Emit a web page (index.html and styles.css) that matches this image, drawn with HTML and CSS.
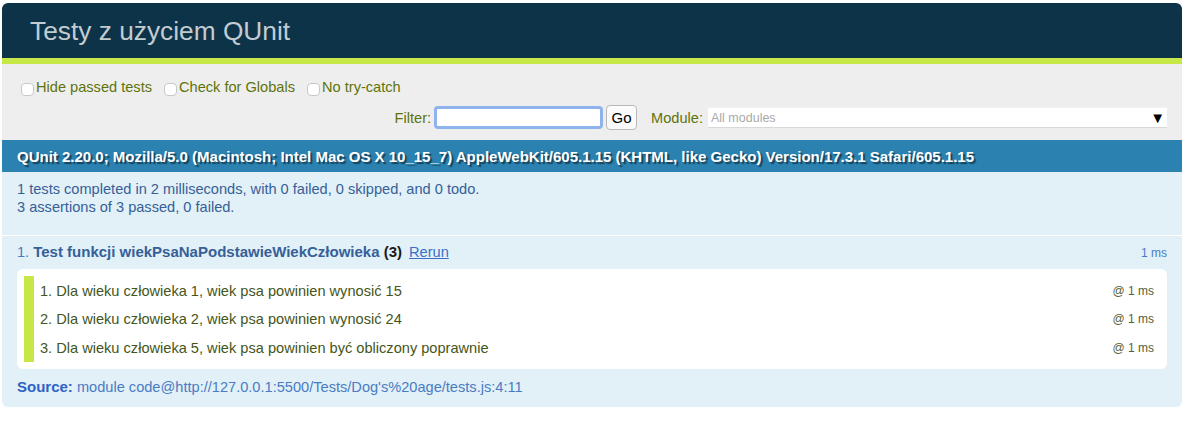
FILE: index.html
```html
<!DOCTYPE html>
<html lang="pl">
<head>
<meta charset="utf-8">
<title>Testy z użyciem QUnit</title>
<link rel="stylesheet" href="styles.css">
</head>
<body>
<div class="qunit">
  <h1 class="header">Testy z użyciem QUnit</h1>
  <div class="banner"></div>
  <div class="toolbar">
    <div class="url-config">
      <label class="opt"><input type="checkbox">Hide passed tests</label>
      <label class="opt"><input type="checkbox">Check for Globals</label>
      <label class="opt"><input type="checkbox">No try-catch</label>
    </div>
    <div class="filters">
      <form class="filter">
        <label class="filter-label">Filter: <input class="filter-input" type="text"></label>
        <button type="button" class="go">Go</button>
      </form>
      <form class="modulefilter">
        <label class="module-label">Module:</label>
        <div class="module-search"><input class="module-input" type="text" placeholder="All modules"><span class="arrow">▼</span></div>
      </form>
    </div>
  </div>
  <h2 class="useragent">QUnit 2.20.0; Mozilla/5.0 (Macintosh; Intel Mac OS X 10_15_7) AppleWebKit/605.1.15 (KHTML, like Gecko) Version/17.3.1 Safari/605.1.15</h2>
  <div class="testresult">
    <div class="result-line">1 tests completed in 2 milliseconds, with 0 failed, 0 skipped, and 0 todo.</div>
    <div class="result-line">3 assertions of 3 passed, 0 failed.</div>
  </div>
  <ol class="tests">
    <li class="test">
      <div class="test-head">
        <span class="num">1.</span>
        <strong class="test-name">Test funkcji wiekPsaNaPodstawieWiekCzłowieka <b class="counts">(3)</b></strong><a class="rerun" href="#">Rerun</a>
        <span class="runtime">1 ms</span>
      </div>
      <ol class="assert-list">
        <li class="assert"><span class="msg">1. Dla wieku człowieka 1, wiek psa powinien wynosić 15</span><span class="assert-time">@ 1 ms</span></li>
        <li class="assert"><span class="msg">2. Dla wieku człowieka 2, wiek psa powinien wynosić 24</span><span class="assert-time">@ 1 ms</span></li>
        <li class="assert"><span class="msg">3. Dla wieku człowieka 5, wiek psa powinien być obliczony poprawnie</span><span class="assert-time">@ 1 ms</span></li>
      </ol>
      <p class="source"><strong>Source:</strong> module code@http://127.0.0.1:5500/Tests/Dog's%20age/tests.js:4:11</p>
    </li>
  </ol>
</div>
</body>
</html>
```

FILE: styles.css
```css
html, body {
  background: #fff;
}
body {
  margin: 3px 7px 0 2px;
  font-family: "Liberation Sans", Arial, Helvetica, sans-serif;
}
.qunit {
  width: 1180px;
}
.header {
  margin: 0;
  height: 55px;
  padding: 2px 0 0 28px;
  box-sizing: border-box;
  display: flex;
  align-items: center;
  background: #0D3349;
  color: #C2CCD1;
  font-size: 26.3px;
  font-weight: 400;
  border-radius: 6px 6px 0 0;
}
.banner {
  height: 6px;
  background: #C6E746;
}
.toolbar {
  background: #EEE;
  color: #5E740B;
  padding: 7px 15px 7px 15px;
  font-size: 14.6px;
}
.url-config {
  height: 31px;
  display: flex;
  align-items: center;
}
.opt {
  display: inline-flex;
  align-items: center;
  margin-right: 8px;
}
.opt input {
  appearance: none;
  -webkit-appearance: none;
  width: 13px;
  height: 13px;
  margin: 6px 2px 0 4px;
  background: #fff;
  border: 1px solid #c8c8c8;
  border-radius: 4px;
  box-sizing: border-box;
}
.filters {
  height: 31px;
  display: flex;
  justify-content: flex-end;
  align-items: center;
}
.filter {
  display: flex;
  align-items: center;
  margin: 0;
}
.filter-label {
  display: flex;
  align-items: center;
}
.filter-input {
  width: 169px;
  height: 23px;
  box-sizing: border-box;
  margin: 0 0 0 3px;
  border: 3px solid #8fb3ec;
  border-radius: 4px;
  background: #fff;
  outline: none;
  font-size: 14px;
}
.go {
  margin: 0 0 0 3px;
  width: 31px;
  height: 25px;
  padding: 0;
  font-family: "Liberation Sans", Arial, sans-serif;
  font-size: 15px;
  color: #000;
  background: #fbfbfb;
  border: 1px solid #b9b9b9;
  border-radius: 4px;
}
.modulefilter {
  display: flex;
  align-items: center;
  margin: 0 0 0 14px;
}
.module-label {
  margin-right: 5px;
}
.module-search {
  position: relative;
  width: 459px;
  height: 21px;
}
.module-input {
  width: 100%;
  height: 21px;
  box-sizing: border-box;
  margin: 0;
  padding: 0 3px;
  border: none;
  border-bottom: 1px solid #d8d8d8;
  border-top: 1px solid #f2f2f2;
  background: #fff;
  font-family: "Liberation Sans", Arial, sans-serif;
  font-size: 12.5px;
  color: #333;
}
.module-input::placeholder {
  color: #a9a9a9;
}
.arrow {
  position: absolute;
  right: 2px;
  top: 1px;
  font-size: 15px;
  line-height: 20px;
  color: #000;
}
.useragent {
  margin: 0;
  height: 32px;
  display: flex;
  align-items: center;
  padding: 0 15px;
  background: #2B81AF;
  color: #fff;
  font-size: 15px;
  font-weight: 700;
  text-shadow: rgba(0, 0, 0, 0.5) 2px 2px 1px;
  white-space: nowrap;
}
.testresult {
  background: #E2F0F7;
  color: #366097;
  font-size: 14.6px;
  padding: 8px 15px 20px 15px;
  height: 64px;
  box-sizing: border-box;
  border-bottom: 1px solid #fff;
}
.result-line {
  line-height: 18px;
}
.tests {
  list-style: none;
  margin: 0;
  padding: 0;
}
.test {
  background: #E2F0F7;
  color: #4A7CC4;
  font-size: 14.6px;
  padding: 7px 15px 7px 15px;
  border-bottom-left-radius: 6px;
  border-bottom-right-radius: 6px;
}
.test-head {
  display: flex;
  align-items: baseline;
  line-height: 18px;
}
.num {
  margin-right: 4px;
}
.test-name {
  color: #366097;
  font-weight: 700;
  font-size: 15px;
}
.counts {
  color: #1a1a1a;
}
.rerun {
  padding: 0 7px;
  color: #3B6FC6;
  text-decoration: underline;
}
.runtime {
  margin-left: auto;
  font-size: 12px;
  color: #4A7CC4;
}
.assert-list {
  list-style: none;
  margin: 7px 0 0 0;
  padding: 7px;
  background: #fff;
  border-radius: 6px;
}
.assert {
  display: flex;
  align-items: center;
  height: 28.67px;
  box-sizing: border-box;
  padding: 1px 6px 0 6px;
  border-left: 10px solid #C6E746;
  color: #44561A;
}
.assert-time {
  margin-left: auto;
  font-size: 12px;
  color: #55603a;
}
.source {
  margin: 9px 0 4px 0;
  line-height: 18px;
  color: #4A7CC4;
}
.source strong {
  color: #2F63C6;
  font-size: 15px;
}
```
